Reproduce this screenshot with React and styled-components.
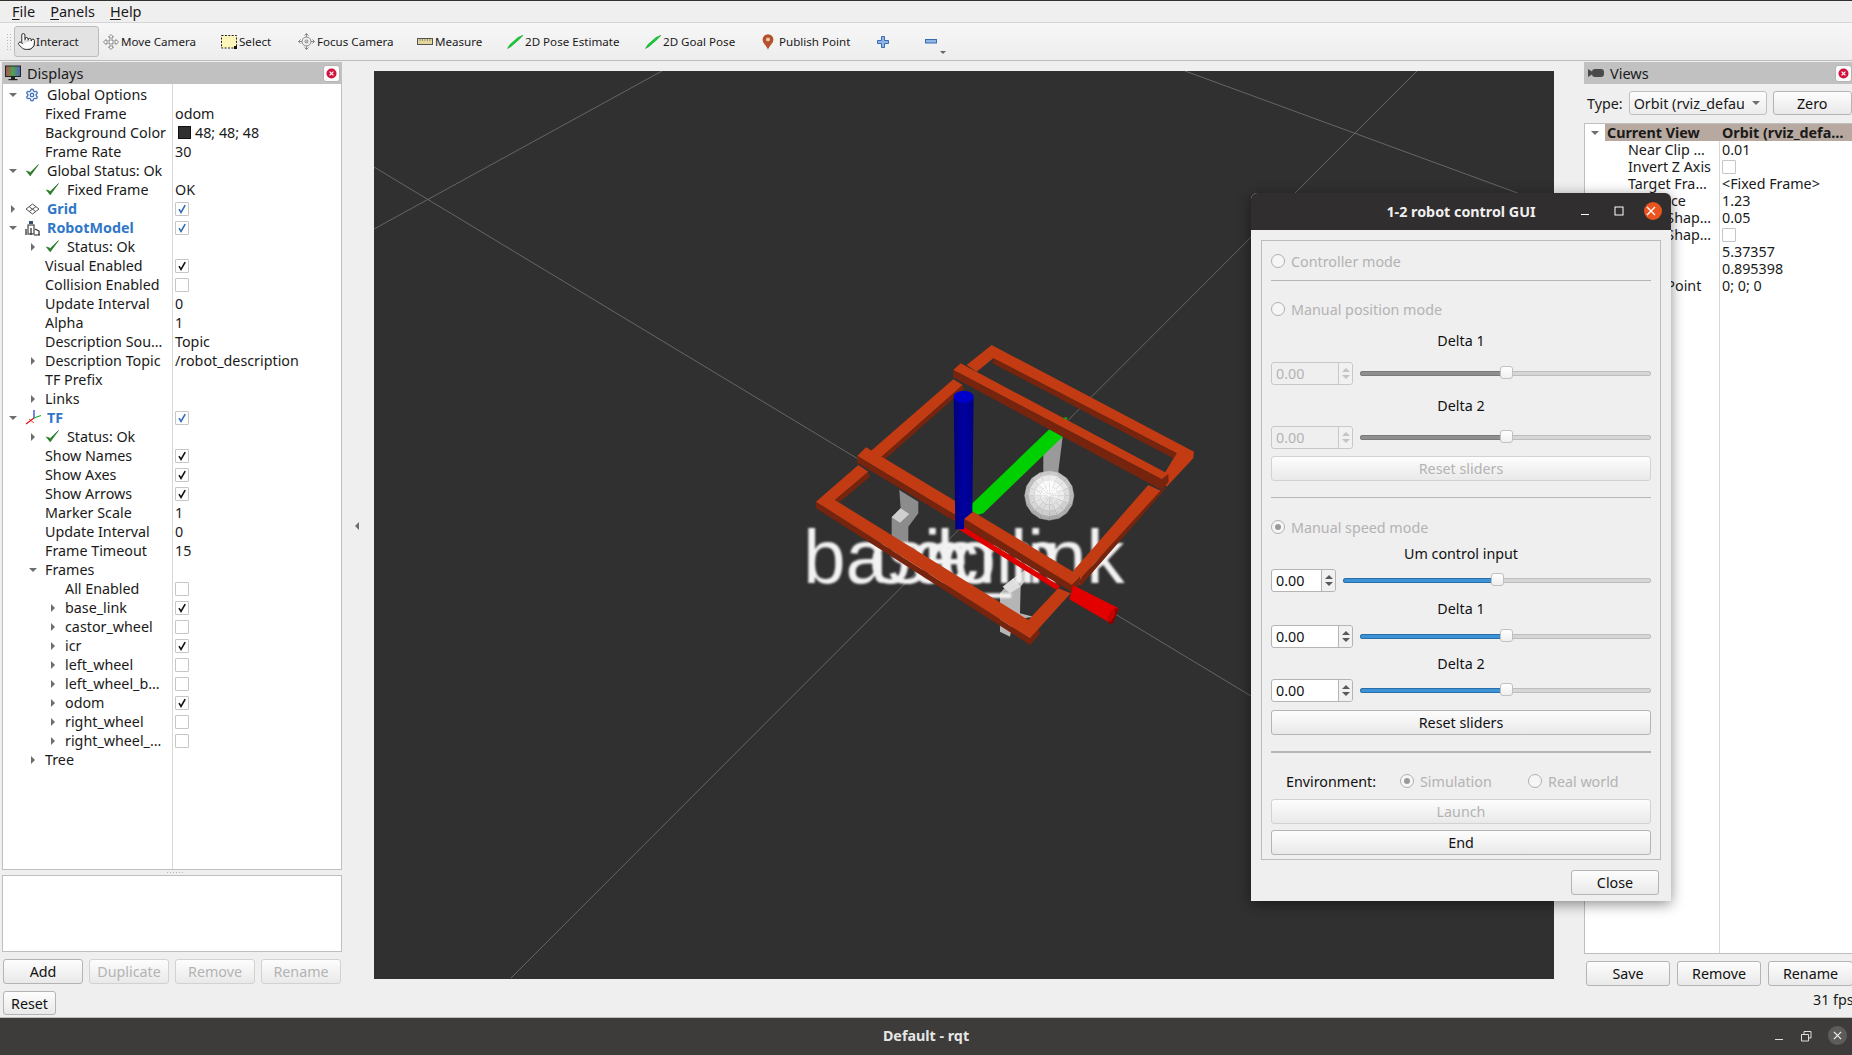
import React from "react";
import styled, { createGlobalStyle } from "styled-components";
import { Settings, Pointer } from "lucide-react";

const GlobalStyle = createGlobalStyle`
  html, body { margin: 0; padding: 0; background: #efefef; }
  * { box-sizing: border-box; }
  body { font-family: "Noto Sans", "Open Sans", sans-serif; font-size: 14.3px; color: #1a1a1a; }
`;

const Page = styled.div`
  position: relative;
  width: 1852px;
  height: 1055px;
  overflow: hidden;
  display: flex;
  flex-direction: column;
  border-top: 1px solid #33312f;
  background: #efefef;
`;

const MenuBar = styled.div`
  height: 22px;
  flex: none;
  display: flex;
  align-items: center;
  padding: 0 0 2px 12px;
  gap: 15px;
  font-size: 14.5px;
  border-bottom: 1px solid #d6d6d6;
  u { text-underline-offset: 2px; }
`;

const Toolbar = styled.div`
  height: 38px;
  flex: none;
  display: flex;
  align-items: center;
  padding-left: 14px;
  position: relative;
  background: linear-gradient(#f7f7f7, #ededed);
  border-bottom: 1px solid #bcbcbc;
`;

const Grip = styled.div`
  position: absolute;
  left: 6px;
  top: 10px;
  width: 5px;
  height: 18px;
  background-image: radial-gradient(#b5b5b5 0.6px, transparent 0.8px);
  background-size: 3px 3px;
`;

const ToolItem = styled.div`
  width: ${(p) => p.$w}px;
  height: 31px;
  flex: none;
  display: flex;
  align-items: center;
  gap: ${(p) => p.$gap ?? 2}px;
  padding-left: ${(p) => p.$pl ?? 3}px;
  font-size: 11.6px;
  border-radius: 3px;
  border: 1px solid ${(p) => (p.$active ? "#bdbdbd" : "transparent")};
  background: ${(p) => (p.$active ? "#e3e3e3" : "transparent")};
  position: relative;
`;

const DropTick = styled.span`
  position: absolute;
  left: 18px;
  bottom: 2px;
  border-left: 3px solid transparent;
  border-right: 3px solid transparent;
  border-top: 3px solid #666;
`;

const Workspace = styled.div`
  flex: 1;
  min-height: 0;
  display: flex;
`;

const LeftDock = styled.div`
  width: 340px;
  margin-left: 2px;
  flex: none;
  display: flex;
  flex-direction: column;
  padding: 1px 0 2px;
`;

const RightDock = styled.div`
  width: 290px;
  flex: none;
  display: flex;
  flex-direction: column;
  padding-top: 1px;
`;

const DockTitle = styled.div`
  height: 22px;
  flex: none;
  display: flex;
  align-items: center;
  gap: 6px;
  padding-left: ${(p) => p.$pl}px;
  background: #c1c1c1;
  font-size: 14.5px;
`;

const CloseBox = styled.div`
  width: 17px;
  height: 17px;
  margin-left: auto;
  margin-right: ${(p) => p.$mr}px;
  display: flex;
  align-items: center;
  justify-content: center;
  background: #fbfbfb;
  border: 1px solid #b5b5b5;
  border-radius: 3px;
`;

const Tree = styled.div`
  flex: ${(p) => (p.$grow ? 1 : "none")};
  height: ${(p) => (p.$h ? `${p.$h}px` : "auto")};
  margin-top: ${(p) => p.$mt ?? 0}px;
  padding-top: ${(p) => p.$pt ?? 0}px;
  background-color: #fff;
  background-image: linear-gradient(#d8d8d8, #d8d8d8);
  background-repeat: no-repeat;
  background-size: 1px 100%;
  background-position: ${(p) => p.$split}px 0;
  border: 1px solid #bfbfbf;
  border-top: ${(p) => (p.$noTop ? "none" : "1px solid #bfbfbf")};
  overflow: hidden;
`;

const Row = styled.div`
  height: ${(p) => p.$h}px;
  display: flex;
  align-items: center;
  white-space: nowrap;
`;

const NameCell = styled.div`
  width: ${(p) => p.$w}px;
  flex: none;
  display: flex;
  align-items: center;
  height: 100%;
  padding-left: ${(p) => p.$level * 20}px;
  color: ${(p) => (p.$blue ? "#2f77c8" : "#1a1a1a")};
  font-weight: ${(p) => (p.$blue ? 700 : 400)};
`;

const ArrowSlot = styled.span`
  width: 19px;
  height: 100%;
  flex: none;
  display: flex;
  align-items: center;
  justify-content: center;
`;

const RightArrow = styled.i`
  display: block;
  border-top: 4px solid transparent;
  border-bottom: 4px solid transparent;
  border-left: 4px solid #6e6e6e;
`;

const LeftArrow = styled.i`
  display: block;
  border-top: 4px solid transparent;
  border-bottom: 4px solid transparent;
  border-right: 4px solid #6e6e6e;
`;

const DownArrow = styled.i`
  display: block;
  border-left: 4px solid transparent;
  border-right: 4px solid transparent;
  border-top: 4px solid #6e6e6e;
`;

const IconSlot = styled.span`
  width: 25px;
  flex: none;
  display: flex;
  align-items: center;
  padding-left: 3px;
`;

const TextStart = styled.span`
  margin-left: 3px;
`;

const ValueCell = styled.div`
  display: flex;
  align-items: center;
  gap: 4px;
  padding-left: ${(p) => p.$pl ?? 2}px;
`;

const Swatch = styled.span`
  width: 13px;
  height: 13px;
  margin-left: 3px;
  background: #303030;
  border: 1px solid #111;
`;

const CheckBox = styled.span`
  width: 14px;
  height: 14px;
  display: flex;
  align-items: center;
  justify-content: center;
  background: #fff;
  border: 1px solid #c6c6c6;
  border-radius: 1px;
`;

const Sash = styled.div`
  height: 5px;
  flex: none;
  background-image: radial-gradient(#b5b5b5 0.6px, transparent 0.8px);
  background-size: 3px 3px;
  background-position: 164px 1px;
  background-repeat: repeat-x;
  mask-image: linear-gradient(90deg, transparent 164px, #000 164px, #000 182px, transparent 182px);
`;

const NoteBox = styled.div`
  height: 77px;
  flex: none;
  background: #fff;
  border: 1px solid #bfbfbf;
`;

const ButtonRow = styled.div`
  display: flex;
  flex: none;
  gap: ${(p) => p.$gap}px;
  margin-top: 7px;
  padding-left: ${(p) => p.$pl ?? 0}px;
`;

const Button = styled.div`
  width: ${(p) => (p.$w ? `${p.$w}px` : "auto")};
  height: ${(p) => p.$h ?? 25}px;
  flex: none;
  margin-top: ${(p) => p.$mt ?? 0}px;
  display: flex;
  align-items: center;
  justify-content: center;
  border-radius: 3px;
  background: linear-gradient(#fdfdfd, #e9e9e9);
  border: 1px solid ${(p) => (p.$off ? "#d2d2d2" : "#b4b4b4")};
  color: ${(p) => (p.$off ? "#b3b3b3" : "#111")};
`;

const Gutter = styled.div`
  width: ${(p) => p.$w}px;
  flex: none;
  display: flex;
  align-items: center;
  justify-content: center;
  padding: 0 2px 27px 0;
`;

const SceneArea = styled.div`
  width: 1180px;
  height: 908px;
  flex: none;
  margin-top: 10px;
  background: #303030;
`;

const TypeRow = styled.div`
  display: flex;
  align-items: center;
  height: 24px;
  flex: none;
  margin-top: 7px;
  padding-left: 3px;
  gap: 6px;
`;

const Combo = styled.div`
  width: 138px;
  height: 24px;
  display: flex;
  align-items: center;
  justify-content: space-between;
  padding: 0 6px 0 4px;
  overflow: hidden;
  white-space: nowrap;
  background: linear-gradient(#fdfdfd, #ececec);
  border: 1px solid #c0c0c0;
  border-radius: 3px;
`;

const ComboText = styled.span`
  width: 110px;
  overflow: hidden;
`;

const HeaderName = styled.div`
  width: 134px;
  flex: none;
  height: 100%;
  display: flex;
  align-items: center;
  font-weight: 700;
  background: linear-gradient(90deg, #fff 20px, #b7a99f 20px);
`;

const HeaderValue = styled.div`
  flex: 1;
  height: 100%;
  display: flex;
  align-items: center;
  padding-left: 3px;
  font-weight: 700;
  background: #b7a99f;
`;

const ViewName = styled.div`
  width: 134px;
  flex: none;
  padding-left: 43px;
`;

const Fps = styled.div`
  margin-top: 4px;
  padding-left: 229px;
  white-space: nowrap;
`;

const Taskbar = styled.div`
  height: 38px;
  flex: none;
  position: relative;
  display: flex;
  align-items: center;
  justify-content: center;
  padding-bottom: 2px;
  background: #3e3c3a;
  border-top: 1px solid #bdbdbd;
  color: #e6e6e6;
  font-weight: 700;
`;

const TaskControls = styled.div`
  position: absolute;
  right: 5px;
  top: 8px;
  display: flex;
  align-items: center;
  gap: 16px;
`;

const TaskClose = styled.span`
  width: 19px;
  height: 19px;
  display: flex;
  align-items: center;
  justify-content: center;
  border-radius: 50%;
  background: #5e5c5a;
`;

const Dialog = styled.div`
  position: absolute;
  left: 1251px;
  top: 192px;
  width: 420px;
  height: 708px;
  display: flex;
  flex-direction: column;
  background: #efefef;
  border-radius: 6px 6px 0 0;
  box-shadow: 0 3px 14px rgba(0, 0, 0, 0.45);
`;

const DialogTitle = styled.div`
  height: 37px;
  flex: none;
  position: relative;
  display: flex;
  align-items: center;
  justify-content: center;
  background: #302e2e;
  border-radius: 6px 6px 0 0;
  color: #f0f0f0;
  font-weight: 700;
`;

const DialogControls = styled.div`
  position: absolute;
  right: 9px;
  top: 9px;
  display: flex;
  align-items: center;
  gap: 20px;
  svg:first-child { margin-right: 4px; }
`;

const DialogClose = styled.span`
  width: 18px;
  height: 18px;
  display: flex;
  align-items: center;
  justify-content: center;
  border-radius: 50%;
  background: #e9541f;
`;

const Group = styled.div`
  height: 620px;
  margin: 10px 10px 0;
  padding: 0 9px;
  display: flex;
  flex-direction: column;
  border: 1px solid #bcbcbc;
`;

const Line = styled.div`
  height: ${(p) => p.$h ?? 1}px;
  flex: none;
  margin-top: ${(p) => p.$mt}px;
  background: #b5b5b5;
`;

const RadioRow = styled.div`
  height: 22px;
  flex: none;
  margin-top: ${(p) => p.$mt}px;
  display: flex;
  align-items: center;
  gap: 6px;
  color: #b3b3b3;
`;

const RadioDot = styled.span`
  width: 14px;
  height: 14px;
  flex: none;
  display: flex;
  align-items: center;
  justify-content: center;
  border: 1px solid #b0b0b0;
  border-radius: 50%;
  background: #f6f6f6;
  &::after {
    content: "";
    width: 6px;
    height: 6px;
    border-radius: 50%;
    background: ${(p) => (p.$on ? "#9a9a9a" : "transparent")};
  }
`;

const Caption = styled.div`
  height: 22px;
  flex: none;
  margin-top: ${(p) => p.$mt}px;
  display: flex;
  align-items: center;
  justify-content: center;
  color: #111;
`;

const SliderRow = styled.div`
  height: 23px;
  flex: none;
  margin-top: ${(p) => p.$mt}px;
  display: flex;
  align-items: center;
  gap: 7px;
`;

const Spin = styled.div`
  width: ${(p) => p.$w}px;
  height: 23px;
  flex: none;
  display: flex;
  background: ${(p) => (p.$off ? "#efefef" : "#fff")};
  border: 1px solid ${(p) => (p.$off ? "#c8c8c8" : "#b4b4b4")};
  border-radius: 3px;
  color: ${(p) => (p.$off ? "#b3b3b3" : "#111")};
`;

const SpinValue = styled.div`
  flex: 1;
  display: flex;
  align-items: center;
  padding-left: 4px;
`;

const SpinArrows = styled.div`
  width: 14px;
  flex: none;
  display: flex;
  flex-direction: column;
  align-items: center;
  justify-content: center;
  gap: 3px;
  background: #f1f1f1;
  border-left: 1px solid ${(p) => (p.$off ? "#c8c8c8" : "#b4b4b4")};
  border-radius: 0 3px 3px 0;
`;

const SpinUp = styled.i`
  display: block;
  border-left: 4px solid transparent;
  border-right: 4px solid transparent;
  border-bottom: 4px solid ${(p) => (p.$off ? "#c4c4c4" : "#5a5a5a")};
`;

const SpinDown = styled.i`
  display: block;
  border-left: 4px solid transparent;
  border-right: 4px solid transparent;
  border-top: 4px solid ${(p) => (p.$off ? "#c4c4c4" : "#5a5a5a")};
`;

const Track = styled.div`
  flex: 1;
  height: 5px;
  position: relative;
  background: #d6d6d6;
  border: 1px solid #bdbdbd;
  border-radius: 2px;
`;

const TrackFill = styled.div`
  height: 100%;
  background: ${(p) => (p.$off ? "#8f8f8f" : "#3d93d8")};
  box-shadow: 0 0 0 1px ${(p) => (p.$off ? "#7a7a7a" : "#2a6ea8")};
  border-radius: 2px;
`;

const Knob = styled.span`
  position: absolute;
  top: -6px;
  width: 13px;
  height: 13px;
  margin-left: -6px;
  background: linear-gradient(#fff, #efefef);
  border: 1px solid #c0c0c0;
  border-radius: 3px;
`;

const EnvRow = styled.div`
  height: 22px;
  flex: none;
  margin-top: 17px;
  display: flex;
  align-items: center;
  padding-left: 15px;
`;

const EnvLabel = styled.span`
  width: 114px;
  flex: none;
  color: #111;
`;

const EnvChoice = styled.span`
  width: ${(p) => p.$w}px;
  flex: none;
  display: flex;
  align-items: center;
  gap: 6px;
  color: #b3b3b3;
`;

const DialogFooter = styled.div`
  display: flex;
  justify-content: flex-end;
  margin-top: 10px;
  padding-right: 12px;
`;

/* small drawn icons */

const Check = ({ color = "#111" }) => (
  <svg width="10" height="10" viewBox="0 0 10 10">
    <path d="M2 5.2 L4 8.4 L8.2 1.2" fill="none" stroke={color} strokeWidth="1.6" />
  </svg>
);

const GreenCheck = () => (
  <svg width="15" height="15" viewBox="0 0 15 15">
    <path d="M1.5 8 L5.2 12.8 L13.4 1.6 L5.4 9.4 Z" fill="#2a7a2a" stroke="#2a7a2a" strokeWidth="0.8" />
  </svg>
);

const GridIcon = () => (
  <svg width="15" height="12" viewBox="0 0 15 12">
    <path d="M7.5 1 L14 6 L7.5 11 L1 6 Z M4 3.6 L10.8 8.6 M11 3.6 L4.2 8.6" fill="none" stroke="#555" strokeWidth="1" />
  </svg>
);

const RobotIcon = () => (
  <svg width="16" height="16" viewBox="0 0 16 16">
    <rect x="4" y="1" width="4" height="3" fill="#33506e" />
    <rect x="3" y="5" width="6" height="9" fill="none" stroke="#444" strokeWidth="1.2" />
    <path d="M1 15 L1 9 M6 8 L6 15 M10 9 L14 11 L14 15 M9 15 L15 15" stroke="#222" strokeWidth="1.2" fill="none" />
  </svg>
);

const AxesIcon = () => (
  <svg width="17" height="17" viewBox="0 0 17 17">
    <path d="M9 9 L9 1" stroke="#2030d0" strokeWidth="1.2" />
    <path d="M9 9 L16 6.5" stroke="#10b020" strokeWidth="1.2" />
    <path d="M9 9 L1 15" stroke="#e01010" strokeWidth="1.2" />
    <path d="M4 10 L9 14" stroke="#e01010" strokeWidth="0.8" />
  </svg>
);

const PanelClose = () => (
  <svg width="11" height="11" viewBox="0 0 11 11">
    <circle cx="5.5" cy="5.5" r="5" fill="#d2123c" />
    <path d="M3.6 3.6 L7.4 7.4 M7.4 3.6 L3.6 7.4" stroke="#fff" strokeWidth="1.2" />
  </svg>
);

const MonitorIcon = () => (
  <svg width="16" height="16" viewBox="0 0 16 16">
    <defs>
      <linearGradient id="screenGrad" x1="0" x2="1" y1="0" y2="0">
        <stop offset="0" stopColor="#b05050" />
        <stop offset="0.5" stopColor="#50a050" />
        <stop offset="1" stopColor="#5060c0" />
      </linearGradient>
    </defs>
    <rect x="0.5" y="1" width="15" height="10.5" fill="url(#screenGrad)" stroke="#222" />
    <rect x="6" y="12" width="4" height="2" fill="#222" />
    <rect x="3.5" y="14" width="9" height="1.2" fill="#222" />
  </svg>
);

const CameraIcon = () => (
  <svg width="16" height="10" viewBox="0 0 16 10">
    <path d="M0 1 L4 3.5 L4 6.5 L0 9 Z" fill="#4a4a4a" />
    <rect x="4" y="1" width="12" height="8" rx="3" fill="#4a4a4a" />
  </svg>
);

const MoveIcon = () => (
  <svg width="16" height="16" viewBox="0 0 16 16">
    <path d="M8 0.5 L10.5 3 L9 3 L9 7 L13 7 L13 5.5 L15.5 8 L13 10.5 L13 9 L9 9 L9 13 L10.5 13 L8 15.5 L5.5 13 L7 13 L7 9 L3 9 L3 10.5 L0.5 8 L3 5.5 L3 7 L7 7 L7 3 L5.5 3 Z" fill="#fff" stroke="#777" strokeWidth="0.9" />
  </svg>
);

const SelectIcon = () => (
  <svg width="16" height="14" viewBox="0 0 16 14">
    <rect x="0.5" y="0.5" width="15" height="12.5" fill="#fdf6b8" stroke="#222" strokeDasharray="2 1.4" />
    <rect x="13" y="11" width="3" height="3" fill="#111" />
  </svg>
);

const FocusIcon = () => (
  <svg width="17" height="17" viewBox="0 0 17 17">
    <path d="M8.5 0.5 L8.5 16.5 M0.5 8.5 L16.5 8.5" stroke="#888" strokeWidth="1" />
    <path d="M6.5 2.5 L8.5 0.5 L10.5 2.5 M6.5 14.5 L8.5 16.5 L10.5 14.5 M2.5 6.5 L0.5 8.5 L2.5 10.5 M14.5 6.5 L16.5 8.5 L14.5 10.5" fill="none" stroke="#888" />
    <circle cx="8.5" cy="8.5" r="4.5" fill="#eee" stroke="#888" />
    <circle cx="8.5" cy="8.5" r="1.6" fill="#bbb" stroke="#888" strokeWidth="0.7" />
  </svg>
);

const RulerIcon = () => (
  <svg width="16" height="7" viewBox="0 0 16 7">
    <rect x="0.5" y="0.5" width="15" height="6" fill="#e4d59a" stroke="#555" />
    <path d="M3 1 L3 3 M5.5 1 L5.5 3 M8 1 L8 3 M10.5 1 L10.5 3 M13 1 L13 3" stroke="#777" strokeWidth="0.7" />
  </svg>
);

const PoseIcon = () => (
  <svg width="16" height="14" viewBox="0 0 16 14">
    <path d="M0.5 13.5 L4 11.5 L12 4.5 L16 0.3 L11 2.5 L3 9.5 Z" fill="#10d030" stroke="#0a8a20" strokeWidth="0.5" />
  </svg>
);

const PinIcon = () => (
  <svg width="12" height="16" viewBox="0 0 12 16">
    <path d="M6 15.8 C4.8 12 0.6 9.4 0.6 5.6 A5.4 5.4 0 0 1 11.4 5.6 C11.4 9.4 7.2 12 6 15.8 Z" fill="#b5512c" />
    <circle cx="6" cy="5.4" r="1.9" fill="#efc9b4" />
  </svg>
);

const PlusIcon = () => (
  <svg width="12" height="12" viewBox="0 0 12 12">
    <path d="M4.5 0.5 H7.5 V4.5 H11.5 V7.5 H7.5 V11.5 H4.5 V7.5 H0.5 V4.5 H4.5 Z" fill="#8fb6e6" stroke="#3a6db0" />
  </svg>
);

const MinusIcon = () => (
  <svg width="12" height="5" viewBox="0 0 12 5">
    <rect x="0.5" y="0.5" width="11" height="3.5" fill="#8fb6e6" stroke="#3a6db0" />
  </svg>
);

const X = ({ size = 10, color = "#fff" }) => (
  <svg width={size} height={size} viewBox="0 0 10 10">
    <path d="M1 1 L9 9 M9 1 L1 9" stroke={color} strokeWidth="1.4" />
  </svg>
);

/* 3D scene. Robot parts use coordinates measured at 3x around (780,330) */

const orange = "#c23b12";
const dark = "#77240e";

// faceted castor ball, rings of shaded quads
const ballFacets = () => {
  const rings = [74, 62, 46, 27, 8];
  const shades = [186, 220, 236, 246, 252];
  const cx = 808;
  const cy = 497;
  const n = 16;
  const out = [];
  rings.forEach((r, ri) => {
    const inner = rings[ri + 1] ?? 0;
    for (let i = 0; i < n; i++) {
      const a = (i / n) * Math.PI * 2;
      const b = ((i + 1) / n) * Math.PI * 2;
      const pt = (rad, ang) => `${cx + rad * Math.cos(ang)},${cy + rad * Math.sin(ang)}`;
      const tilt = Math.sin(a + 0.2) * 16 + (i % 2 ? 2 : -2);
      const v = Math.max(120, Math.min(255, Math.round(shades[ri] - tilt)));
      out.push(
        <polygon key={`${ri}-${i}`} points={`${pt(r, a)} ${pt(r, b)} ${pt(inner, b)} ${pt(inner, a)}`} fill={`rgb(${v},${v},${v})`} stroke={`rgb(${v},${v},${v})`} strokeWidth="1" />
      );
    }
  });
  return out;
};

const Scene = () => (
  <svg width="1180" height="908" viewBox="374 71 1180 908">
    <defs>
      <filter id="labelBlur">
        <feGaussianBlur stdDeviation="3.5" />
      </filter>
      <linearGradient id="blueGrad" x1="0" x2="1" y1="0" y2="0">
        <stop offset="0" stopColor="#00007e" />
        <stop offset="0.5" stopColor="#0000a0" />
        <stop offset="1" stopColor="#000088" />
      </linearGradient>
    </defs>
    <g stroke="#666" strokeWidth="1" fill="none">
      <path d="M374 167 L1251 696" />
      <path d="M374 229 L662 71" />
      <path d="M511 978 L1417 71" />
      <path d="M1185 71 L1553 206" />
    </g>
    <g transform="translate(780 330) scale(0.3333)">
      {/* grey legs and castor */}
      <path d="M358 480 L415 515 L415 550 L385 590 L385 640 L440 700 L380 700 L335 640 L335 562 L362 535 Z" fill="#8c8c8c" />
      <path d="M335 562 L362 535 L388 552 L360 578 Z" fill="#cfcfcf" />
      <path d="M790 340 L848 320 L832 450 L790 465 Z" fill="#9a9a9a" />
      {ballFacets()}
      <path d="M660 790 L700 745 L735 720 L750 735 L722 770 L720 850 L760 860 L700 870 L690 920 L660 905 Z" fill="#b5b5b5" />
      <path d="M668 770 L700 745 L722 770 L690 790 Z" fill="#dedede" />
      <g fontFamily="Liberation Sans" fontSize="228" fill="#f2f2f2" filter="url(#labelBlur)">
        <text x="70" y="760">base_link</text>
        <text x="267" y="760">odom</text>
        <text x="432" y="760">icr</text>
      </g>

      {/* lower frame */}
      <path d="M108 515 L108 535 L750 945 L780 912 L775 895 L750 925 Z" fill={dark} />
      <path d="M108 515 L235 405 L265 425 L165 510 L745 870 L835 775 L872 790 L750 925 Z" fill={orange} />
      <path d="M165 510 L265 425 L270 440 L180 515 Z" fill={dark} />
      <path d="M270 365 L520 148 L548 165 L305 380 Z" fill={orange} />
      <path d="M305 380 L548 165 L552 178 L315 388 Z" fill={dark} />

      {/* top rail */}
      <path d="M560 105 L635 45 L1242 365 L1240 385 L1160 470 L1145 445 L1190 370 L640 85 L590 125 Z" fill={orange} />
      <path d="M640 85 L1190 370 L1180 385 L638 100 Z" fill={dark} />

      {/* right side bar */}
      <path d="M880 722 L1105 465 L1142 482 L900 748 Z" fill={orange} />
      <path d="M900 748 L1142 482 L1162 470 L900 770 Z" fill={dark} />

      {/* green axis and tip */}
      <path d="M572 525 L808 298 L848 320 L610 550 L580 558 Z" fill="#00d000" />
      <path d="M845 264 L862 262 L860 275 L850 275 Z" fill="#00c000" />

      {/* second cross bar */}
      <path d="M520 120 L542 100 L1165 432 L1145 448 Z" fill={orange} />
      <path d="M520 120 L520 142 L1145 480 L1166 455 L1165 432 L1145 448 Z" fill={dark} />

      {/* first cross bar */}
      <path d="M232 378 L258 352 L900 738 L875 765 Z" fill={orange} />
      <path d="M232 378 L232 398 L875 785 L900 760 L900 738 L875 765 Z" fill={dark} />

      {/* red axis */}
      <path d="M535 598 L552 590 L840 768 L830 780 Z" fill="#e00000" />
      <path d="M880 766 L1016 835 L992 880 L868 808 Z" fill="#e20000" />
      <path d="M1016 835 L1000 880 L985 882 L1002 836 Z" fill="#8e0000" />
      <ellipse cx="994" cy="856" rx="9" ry="20" transform="rotate(28 994 856)" fill="#c80000" />

      {/* blue axis */}
      <path d="M521 200 L581 200 L577 550 L553 568 L552 598 L526 598 Z" fill="url(#blueGrad)" />
      <ellipse cx="551" cy="200" rx="30" ry="18" fill="#0000cc" />
      <path d="M553 566 L575 548 L900 738 L875 765 Z" fill={orange} />
      <path d="M553 566 L553 590 L875 785 L875 765 Z" fill={dark} />
    </g>
  </svg>
);

const displayRows = [
  { level: 0, arrow: "down", icon: <Settings size={14} color="#4a78c0" strokeWidth={2.4} />, label: "Global Options" },
  { level: 1, label: "Fixed Frame", value: "odom" },
  { level: 1, label: "Background Color", swatch: true, value: "48; 48; 48" },
  { level: 1, label: "Frame Rate", value: "30" },
  { level: 0, arrow: "down", icon: <GreenCheck />, label: "Global Status: Ok" },
  { level: 1, icon: <GreenCheck />, label: "Fixed Frame", value: "OK" },
  { level: 0, arrow: "right", icon: <GridIcon />, label: "Grid", blue: true, check: "blue" },
  { level: 0, arrow: "down", icon: <RobotIcon />, label: "RobotModel", blue: true, check: "blue" },
  { level: 1, arrow: "right", icon: <GreenCheck />, label: "Status: Ok" },
  { level: 1, label: "Visual Enabled", check: "on" },
  { level: 1, label: "Collision Enabled", check: "off" },
  { level: 1, label: "Update Interval", value: "0" },
  { level: 1, label: "Alpha", value: "1" },
  { level: 1, label: "Description Sou…", value: "Topic" },
  { level: 1, arrow: "right", label: "Description Topic", value: "/robot_description" },
  { level: 1, label: "TF Prefix" },
  { level: 1, arrow: "right", label: "Links" },
  { level: 0, arrow: "down", icon: <AxesIcon />, label: "TF", blue: true, check: "blue" },
  { level: 1, arrow: "right", icon: <GreenCheck />, label: "Status: Ok" },
  { level: 1, label: "Show Names", check: "on" },
  { level: 1, label: "Show Axes", check: "on" },
  { level: 1, label: "Show Arrows", check: "on" },
  { level: 1, label: "Marker Scale", value: "1" },
  { level: 1, label: "Update Interval", value: "0" },
  { level: 1, label: "Frame Timeout", value: "15" },
  { level: 1, arrow: "down", label: "Frames" },
  { level: 2, label: "All Enabled", check: "off" },
  { level: 2, arrow: "right", label: "base_link", check: "on" },
  { level: 2, arrow: "right", label: "castor_wheel", check: "off" },
  { level: 2, arrow: "right", label: "icr", check: "on" },
  { level: 2, arrow: "right", label: "left_wheel", check: "off" },
  { level: 2, arrow: "right", label: "left_wheel_b…", check: "off" },
  { level: 2, arrow: "right", label: "odom", check: "on" },
  { level: 2, arrow: "right", label: "right_wheel", check: "off" },
  { level: 2, arrow: "right", label: "right_wheel_…", check: "off" },
  { level: 1, arrow: "right", label: "Tree" },
];

const viewRows = [
  { label: "Near Clip …", value: "0.01" },
  { label: "Invert Z Axis", check: true },
  { label: "Target Fra…", value: "<Fixed Frame>" },
  { label: "Distance", value: "1.23" },
  { label: "Focal Shap…", value: "0.05" },
  { label: "Focal Shap…", check: true },
  { label: "Yaw", value: "5.37357" },
  { label: "Pitch", value: "0.895398" },
  { label: "Focal Point", value: "0; 0; 0" },
];

const DisplayRow = ({ row }) => (
  <Row $h={19}>
    <NameCell $w={170} $level={row.level} $blue={row.blue}>
      <ArrowSlot>
        {row.arrow === "down" && <DownArrow />}
        {row.arrow === "right" && <RightArrow />}
      </ArrowSlot>
      {row.icon && <IconSlot>{row.icon}</IconSlot>}
      {row.icon ? row.label : <TextStart>{row.label}</TextStart>}
    </NameCell>
    <ValueCell>
      {row.swatch && <Swatch />}
      {row.check && (
        <CheckBox>
          {row.check === "on" && <Check />}
          {row.check === "blue" && <Check color="#2f6db5" />}
        </CheckBox>
      )}
      {row.value}
    </ValueCell>
  </Row>
);

const Radio = ({ on, label, mt }) => (
  <RadioRow $mt={mt}>
    <RadioDot $on={on} />
    {label}
  </RadioRow>
);

const SliderLine = ({ off, spinW = 82, mt, pos = 50 }) => (
  <SliderRow $mt={mt}>
    <Spin $w={spinW} $off={off}>
      <SpinValue>0.00</SpinValue>
      <SpinArrows $off={off}>
        <SpinUp $off={off} />
        <SpinDown $off={off} />
      </SpinArrows>
    </Spin>
    <Track>
      <TrackFill $off={off} style={{ width: `${pos}%` }} />
      <Knob style={{ left: `${pos}%` }} />
    </Track>
  </SliderRow>
);

const App = () => (
  <Page>
    <GlobalStyle />
    <MenuBar>
      <span><u>F</u>ile</span>
      <span><u>P</u>anels</span>
      <span><u>H</u>elp</span>
    </MenuBar>
    <Toolbar>
      <Grip />
      <ToolItem $w={85} $active $gap={0} $pl={2}><Pointer size={19} strokeWidth={1.2} color="#222" fill="#fff" />Interact</ToolItem>
      <ToolItem $w={118}><MoveIcon />Move Camera</ToolItem>
      <ToolItem $w={77}><SelectIcon />Select</ToolItem>
      <ToolItem $w={119}><FocusIcon />Focus Camera</ToolItem>
      <ToolItem $w={90}><RulerIcon />Measure</ToolItem>
      <ToolItem $w={138}><PoseIcon />2D Pose Estimate</ToolItem>
      <ToolItem $w={117}><PoseIcon />2D Goal Pose</ToolItem>
      <ToolItem $w={115} $gap={5}><PinIcon />Publish Point</ToolItem>
      <ToolItem $w={48}><PlusIcon /></ToolItem>
      <ToolItem $w={30}><MinusIcon /><DropTick /></ToolItem>
    </Toolbar>
    <Workspace>
      <LeftDock>
        <DockTitle $pl={3}>
          <MonitorIcon />
          Displays
          <CloseBox $mr={2}><PanelClose /></CloseBox>
        </DockTitle>
        <Tree $grow $split={169} $noTop $pt={1}>
          {displayRows.map((row, i) => (
            <DisplayRow key={i} row={row} />
          ))}
        </Tree>
        <Sash />
        <NoteBox />
        <ButtonRow $gap={6} $pl={1}>
          <Button $w={80}>Add</Button>
          <Button $w={80} $off>Duplicate</Button>
          <Button $w={80} $off>Remove</Button>
          <Button $w={80} $off>Rename</Button>
        </ButtonRow>
        <ButtonRow $gap={0} $pl={1}>
          <Button $w={53} $h={24}>Reset</Button>
        </ButtonRow>
      </LeftDock>
      <Gutter $w={32}>
        <LeftArrow />
      </Gutter>
      <SceneArea>
        <Scene />
      </SceneArea>
      <Gutter $w={30} />
      <RightDock>
        <DockTitle $pl={4}>
          <CameraIcon />
          Views
          <CloseBox $mr={22}><PanelClose /></CloseBox>
        </DockTitle>
        <TypeRow>
          Type:
          <Combo>
            <ComboText>Orbit (rviz_default_plugins)</ComboText>
            <DownArrow />
          </Combo>
          <Button $w={79} $h={24}>Zero</Button>
        </TypeRow>
        <Tree $h={831} $mt={8} $split={134}>
          <Row $h={17}>
            <HeaderName>
              <ArrowSlot><DownArrow /></ArrowSlot>
              <TextStart>Current View</TextStart>
            </HeaderName>
            <HeaderValue>Orbit (rviz_defa…</HeaderValue>
          </Row>
          {viewRows.map((row, i) => (
            <Row $h={17} key={i}>
              <ViewName>{row.label}</ViewName>
              <ValueCell $pl={3}>
                {row.check ? <CheckBox /> : row.value}
              </ValueCell>
            </Row>
          ))}
        </Tree>
        <ButtonRow $gap={7} $pl={2}>
          <Button $w={84}>Save</Button>
          <Button $w={84}>Remove</Button>
          <Button $w={85}>Rename</Button>
        </ButtonRow>
        <Fps>31 fps</Fps>
      </RightDock>
    </Workspace>
    <Taskbar>
      Default - rqt
      <TaskControls>
        <svg width="10" height="10" viewBox="0 0 10 10"><path d="M1 8.5 H9" stroke="#ddd" /></svg>
        <svg width="12" height="12" viewBox="0 0 12 12"><path d="M1.5 4.5 H8.5 V11 H1.5 Z M4 4 V1.5 H11 V8 H9" fill="none" stroke="#ddd" /></svg>
        <TaskClose><X size={9} color="#eee" /></TaskClose>
      </TaskControls>
    </Taskbar>
    <Dialog>
      <DialogTitle>
        1-2 robot control GUI
        <DialogControls>
          <svg width="10" height="10" viewBox="0 0 10 10"><path d="M1 8.5 H9" stroke="#fff" /></svg>
          <svg width="10" height="10" viewBox="0 0 10 10"><rect x="1" y="1" width="8" height="8" fill="none" stroke="#fff" /></svg>
          <DialogClose><X size={10} /></DialogClose>
        </DialogControls>
      </DialogTitle>
      <Group>
        <Radio label="Controller mode" mt={9} />
        <Line $mt={8} />
        <Radio label="Manual position mode" mt={17} />
        <Caption $mt={9}>Delta 1</Caption>
        <SliderLine off mt={11} />
        <Caption $mt={9}>Delta 2</Caption>
        <SliderLine off mt={10} />
        <Button $off $mt={7}>Reset sliders</Button>
        <Line $mt={16} />
        <Radio on label="Manual speed mode" mt={18} />
        <Caption $mt={4}>Um control input</Caption>
        <SliderLine spinW={65} mt={5} />
        <Caption $mt={5}>Delta 1</Caption>
        <SliderLine mt={6} />
        <Caption $mt={4}>Delta 2</Caption>
        <SliderLine mt={5} />
        <Button $mt={8}>Reset sliders</Button>
        <Line $h={2} $mt={16} />
        <EnvRow>
          <EnvLabel>Environment:</EnvLabel>
          <EnvChoice $w={128}><RadioDot $on />Simulation</EnvChoice>
          <EnvChoice $w={110}><RadioDot />Real world</EnvChoice>
        </EnvRow>
        <Button $off $mt={7}>Launch</Button>
        <Button $mt={6}>End</Button>
      </Group>
      <DialogFooter>
        <Button $w={88}>Close</Button>
      </DialogFooter>
    </Dialog>
  </Page>
);

export default App;
